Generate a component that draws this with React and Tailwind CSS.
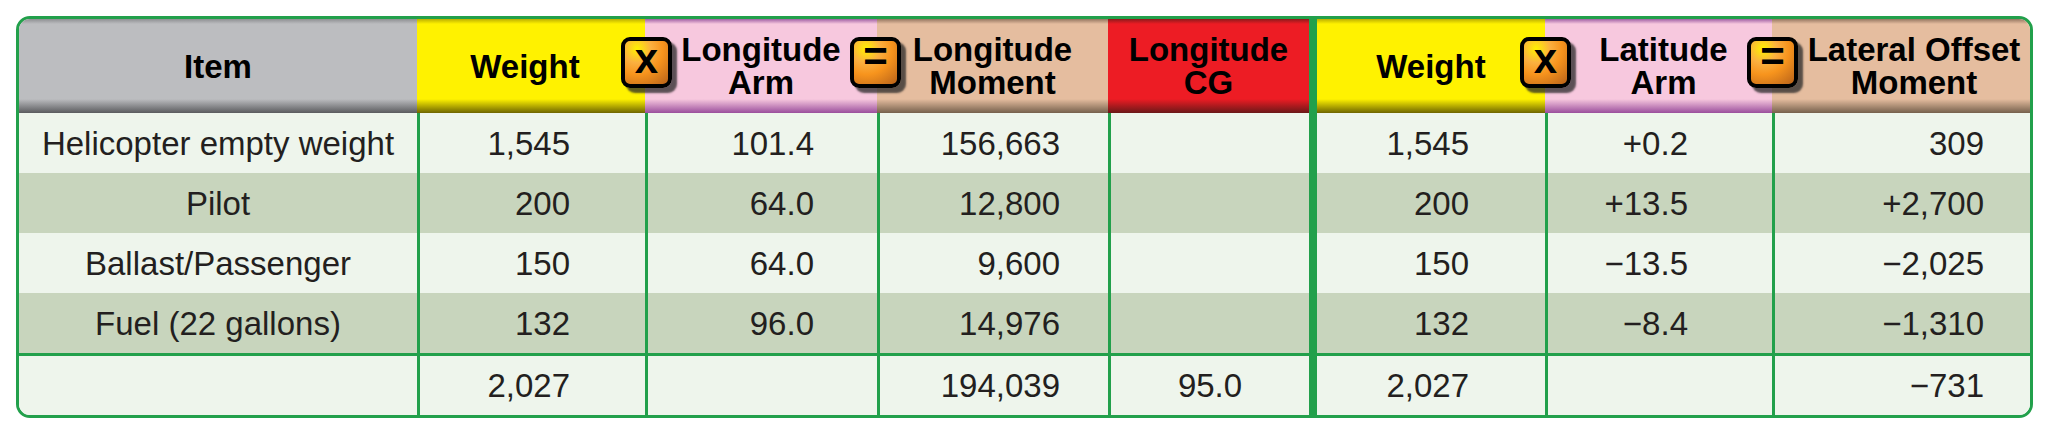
import React from "react";

const G = "border-[#22a04b]";

function Op({ sym, pos }) {
  return (
    <div
      className={`absolute top-[18px] ${pos} z-20 w-[51px] h-[51px] rounded-[9px] border-[4px] border-black bg-[radial-gradient(circle_at_28%_18%,#fff200_0%,#fbb040_30%,#f7941d_55%,#b8621a_100%)] shadow-[5px_5px_2px_rgba(40,40,40,0.75)] flex items-center justify-center font-bold text-black text-[42px] leading-none`}
    >
      {sym === "x" ? (
        <span className="-mt-[8px]">x</span>
      ) : (
        <span className="-mt-[12px]">=</span>
      )}
    </div>
  );
}

const rows = [
  {
    item: "Helicopter empty weight",
    w: "1,545",
    la: "101.4",
    lm: "156,663",
    cg: "",
    w2: "1,545",
    ta: "+0.2",
    tm: "309",
    bg: "bg-[#eef5ec]",
  },
  {
    item: "Pilot",
    w: "200",
    la: "64.0",
    lm: "12,800",
    cg: "",
    w2: "200",
    ta: "+13.5",
    tm: "+2,700",
    bg: "bg-[#c8d5bd]",
  },
  {
    item: "Ballast/Passenger",
    w: "150",
    la: "64.0",
    lm: "9,600",
    cg: "",
    w2: "150",
    ta: "\u221213.5",
    tm: "\u22122,025",
    bg: "bg-[#eef5ec]",
  },
  {
    item: "Fuel (22 gallons)",
    w: "132",
    la: "96.0",
    lm: "14,976",
    cg: "",
    w2: "132",
    ta: "\u22128.4",
    tm: "\u22121,310",
    bg: "bg-[#c8d5bd]",
  },
];

const total = {
  item: "",
  w: "2,027",
  la: "",
  lm: "194,039",
  cg: "95.0",
  w2: "2,027",
  ta: "",
  tm: "\u2212731",
  bg: "bg-[#eef5ec]",
};

const hd =
  "relative h-[94px] flex items-center justify-center text-center font-bold text-[33px] leading-[33px] text-black";

export default function App() {
  const cell = "flex items-center text-[33px] text-[#231f20] leading-none";
  const bl = `border-l-[3px] ${G}`;

  const leftRow = (r, isTotal, i) => {
    const h = isTotal ? `h-[62px] border-t-[3px] ${G}` : "h-[60px]";
    return (
      <React.Fragment key={i}>
        <div className={`${cell} ${h} ${r.bg} justify-center`}>{r.item}</div>
        <div className={`${cell} ${h} ${r.bg} ${bl} justify-end pr-[75px]`}>{r.w}</div>
        <div className={`${cell} ${h} ${r.bg} ${bl} justify-end pr-[63px]`}>{r.la}</div>
        <div className={`${cell} ${h} ${r.bg} ${bl} justify-end pr-[48px]`}>{r.lm}</div>
        <div className={`${cell} ${h} ${r.bg} ${bl} justify-center`}>{r.cg}</div>
      </React.Fragment>
    );
  };

  const rightRow = (r, isTotal, i) => {
    const h = isTotal ? `h-[62px] border-t-[3px] ${G}` : "h-[60px]";
    return (
      <React.Fragment key={i}>
        <div className={`${cell} ${h} ${r.bg} justify-end pr-[76px]`}>{r.w2}</div>
        <div className={`${cell} ${h} ${r.bg} ${bl} justify-end pr-[84px]`}>{r.ta}</div>
        <div className={`${cell} ${h} ${r.bg} ${bl} justify-end pr-[46px]`}>{r.tm}</div>
      </React.Fragment>
    );
  };

  return (
    <div className="w-[2049px] h-[433px] bg-white pt-[16px] pl-[16px] font-['Liberation_Sans',Arial,sans-serif]">
      <div className={`flex w-[2017px] border-[3px] ${G} rounded-[14px] overflow-hidden`}>
        {/* Left part */}
        <div className="grid grid-cols-[398px_228px_232px_231px_201px]">
          <div className={`${hd} bg-[linear-gradient(to_bottom,#8e8f92_0px,#bcbdc0_5px,#bcbdc0_80px,#5a5b5e_94px)]`}>
            Item
          </div>
          <div className={`${hd} pr-[12px] bg-[linear-gradient(to_bottom,#bdb000_0px,#fff200_5px,#fff200_80px,#6e6500_94px)]`}>
            Weight
            <Op sym="x" pos="right-[-27px]" />
          </div>
          <div className={`${hd} bg-[linear-gradient(to_bottom,#a060a4_0px,#f7c8de_5px,#f7c8de_80px,#9a4e9c_94px)]`}>
            <span>
              Longitude
              <br />
              Arm
            </span>
            <Op sym="=" pos="right-[-24px]" />
          </div>
          <div className={`${hd} bg-[linear-gradient(to_bottom,#957661_0px,#e5bd9f_5px,#e5bd9f_80px,#75604c_94px)]`}>
            <span>
              Longitude
              <br />
              Moment
            </span>
          </div>
          <div className={`${hd} bg-[linear-gradient(to_bottom,#8e1a1c_0px,#ed1c24_5px,#ed1c24_80px,#6a1818_94px)]`}>
            <span>
              Longitude
              <br />
              CG
            </span>
          </div>
          {rows.map((r, i) => leftRow(r, false, i))}
          {leftRow(total, true, "t")}
        </div>

        {/* Separator */}
        <div className="w-[8px] bg-[#22a04b]" />

        {/* Right part */}
        <div className="grid grid-cols-[228px_227px_258px]">
          <div className={`${hd} bg-[linear-gradient(to_bottom,#bdb000_0px,#fff200_5px,#fff200_80px,#6e6500_94px)]`}>
            Weight
            <Op sym="x" pos="right-[-26px]" />
          </div>
          <div className={`${hd} pl-[10px] bg-[linear-gradient(to_bottom,#a060a4_0px,#f7c8de_5px,#f7c8de_80px,#9a4e9c_94px)]`}>
            <span>
              Latitude
              <br />
              Arm
            </span>
            <Op sym="=" pos="right-[-26px]" />
          </div>
          <div className={`${hd} pl-[26px] bg-[linear-gradient(to_bottom,#957661_0px,#e5bd9f_5px,#e5bd9f_80px,#75604c_94px)]`}>
            <span>
              Lateral Offset
              <br />
              Moment
            </span>
          </div>
          {rows.map((r, i) => rightRow(r, false, i))}
          {rightRow(total, true, "t")}
        </div>
      </div>
    </div>
  );
}
